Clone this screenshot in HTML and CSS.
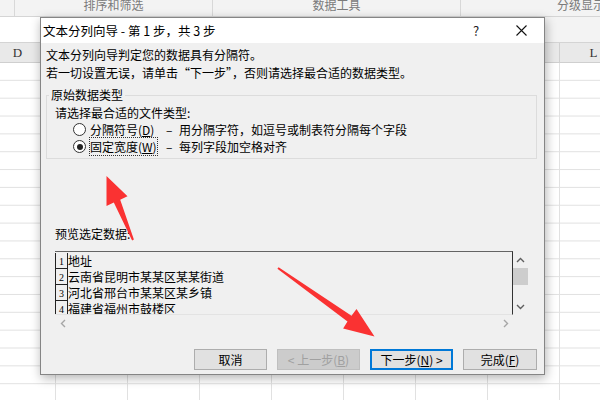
FILE: index.html
```html
<!DOCTYPE html>
<html lang="zh-CN">
<head>
  <meta charset="UTF-8" />
  <title>文本分列向导</title>
  <link rel="stylesheet" href="styles.css">
</head>
<body>
  <div class="excel">
    <div class="ribbon">
      <div class="ribbon-group g0"></div>
      <div class="ribbon-group g1">排序和筛选</div>
      <div class="ribbon-group g2">数据工具</div>
      <div class="ribbon-group g3">分级显示</div>
    </div>
    <div class="formula-bar"><div class="formula-input"></div></div>
    <div class="col-headers">
      <div class="col">D</div><div class="col"></div><div class="col"></div>
      <div class="col"></div><div class="col"></div><div class="col"></div>
      <div class="col"></div><div class="col"></div><div class="col">L</div>
    </div>
    <div class="grid"></div>
  </div>

  <div class="dialog">
    <div class="titlebar">
      <span class="title">文本分列向导 - 第 1 步，共 3 步</span>
      <span class="help">?</span>
      <span class="close">
        <svg width="11" height="11" viewBox="0 0 11 11"><path d="M0.5 0.5 L10.5 10.5 M10.5 0.5 L0.5 10.5" stroke="#111" stroke-width="1.1" fill="none"/></svg>
      </span>
    </div>

    <div class="content">
      <p class="line">文本分列向导判定您的数据具有分隔符。</p>
      <p class="line">若一切设置无误，请单击“下一步”，否则请选择最合适的数据类型。</p>

      <fieldset class="group">
        <legend>原始数据类型</legend>
        <div class="group-body">
          <div class="row">请选择最合适的文件类型:</div>
          <div class="row radio-row">
            <span class="radio"></span>
            <span class="opt">分隔符号(<u>D</u>)</span><span class="dash">–</span>用分隔字符，如逗号或制表符分隔每个字段
          </div>
          <div class="row radio-row">
            <span class="radio checked"></span>
            <span class="opt"><span class="focus">固定宽度(<u>W</u>)</span></span><span class="dash">–</span>每列字段加空格对齐
          </div>
        </div>
      </fieldset>

      <div class="preview-label">预览选定数据:</div>
      <div class="preview">
        <div class="preview-data">
          <div class="prow"><span class="num">1</span>地址</div>
          <div class="prow"><span class="num">2</span>云南省昆明市某某区某某街道</div>
          <div class="prow"><span class="num">3</span>河北省邢台市某某区某乡镇</div>
          <div class="prow"><span class="num">4</span>福建省福州市鼓楼区</div>
        </div>
        <div class="vbar">
          <span class="arrow-btn">
            <svg width="9" height="6" viewBox="0 0 9 6"><path d="M1 5 L4.5 1.5 L8 5" stroke="#5f5f5f" stroke-width="1.4" fill="none"/></svg>
          </span>
          <span class="thumb"></span>
          <span class="arrow-btn">
            <svg width="9" height="6" viewBox="0 0 9 6"><path d="M1 1 L4.5 4.5 L8 1" stroke="#5f5f5f" stroke-width="1.4" fill="none"/></svg>
          </span>
        </div>
        <div class="hbar">
          <span class="arrow-btn">
            <svg width="6" height="9" viewBox="0 0 6 9"><path d="M5 1 L1.5 4.5 L5 8" stroke="#a6a6a6" stroke-width="1.4" fill="none"/></svg>
          </span>
          <span class="arrow-btn">
            <svg width="6" height="9" viewBox="0 0 6 9"><path d="M1 1 L4.5 4.5 L1 8" stroke="#a6a6a6" stroke-width="1.4" fill="none"/></svg>
          </span>
        </div>
        <div class="corner"></div>
      </div>

      <div class="buttons">
        <button class="btn w73">取消</button>
        <button class="btn w83" disabled>&lt; 上一步(<u>B</u>)</button>
        <button class="btn w83 default">下一步(<u>N</u>) &gt;</button>
        <button class="btn w74">完成(<u>F</u>)</button>
      </div>
    </div>
  </div>

  <!-- 标注箭头 -->
  <svg class="marks" width="600" height="400" viewBox="0 0 600 400">
    <polygon fill="#fa3232" points="133.9,239.6 120.2,199.7 127.5,196.2 106.5,176 106.5,206 113.8,202.4 132.1,240.4"/>
    <polygon fill="#fa3232" points="277.4,268.8 347.5,321.6 343.1,328.5 374.5,336.5 356.5,309 351.5,315.8 278.6,267.2"/>
  </svg>
</body>
</html>
```

FILE: styles.css
```css
* { box-sizing: border-box; }
body { margin: 0; width: 600px; height: 400px; overflow: hidden; position: relative; background: #fff; font-family: "Noto Sans CJK SC", sans-serif; font-size: 12px; color: #000; }

/* 背景表格 */
.excel { width: 600px; height: 400px; overflow: hidden; }
.ribbon { display: flex; height: 17px; background: #f3f3f3; border-bottom: 1px solid #d5d5d5; overflow: hidden; }
.ribbon-group { flex: none; border-right: 1px solid #d8d8d8; color: #7b7b7b; font-size: 12px; line-height: 9px; text-align: center; white-space: nowrap; }
.g0 { width: 15px; }
.g1 { width: 198px; }
.g2 { width: 248px; }
.g3 { width: 240px; border-right: none; }
.formula-bar { display: flex; height: 26px; background: #f3f3f3; border-bottom: 1px solid #d4d4d4; }
.formula-input { width: 520px; background: #fff; }
.col-headers { display: flex; height: 20px; margin-left: -16px; background: #e9e9e9; border-bottom: 1px solid #cfcfcf; }
.col { flex: none; width: 72px; padding-right: 4px; border-right: 1px solid #d0d0d0; text-align: center; font-family: "Liberation Serif", serif; font-size: 13px; line-height: 19px; color: #333; }
.grid { height: 337px; background-image: linear-gradient(#e1e1e1 1px, transparent 1px), linear-gradient(90deg, #e1e1e1 1px, transparent 1px); background-size: 100% 17.85px, 72px 100%; background-position: 0 16.85px, 55px 0; }

/* 对话框 */
.dialog { position: absolute; left: 40px; top: 17px; width: 505px; height: 358px; background: #f0f0f0; border: 1px solid #858585; box-shadow: 1px 3px 10px rgba(0, 0, 0, 0.3); }
.titlebar { display: flex; align-items: center; height: 25px; padding-left: 2px; background: #fff; }
.title { font-size: 12.5px; line-height: 25px; }
.help { margin-left: auto; width: 40px; text-align: center; font-size: 13px; line-height: 25px; color: #222; }
.close { display: flex; align-items: center; justify-content: center; width: 46px; height: 25px; margin-left: 2px; }

.content { padding: 3px 7px 0 5px; }
.line { margin: 0; line-height: 18px; white-space: nowrap; }

.group { margin: 4px 0 0; padding: 0 0 3px; border: 1px solid #dcdcdc; min-width: 0; }
.group legend { margin-left: 2px; padding: 0 2px; line-height: 18px; }
.group-body { padding-left: 8px; }
.row { line-height: 17px; height: 17px; white-space: nowrap; }
.radio-row { display: flex; align-items: center; margin-left: 18px; }
.radio { flex: none; position: relative; width: 13px; height: 13px; margin-right: 4px; border: 1px solid #333; border-radius: 50%; background: #fff; }
.radio.checked::after { content: ""; position: absolute; left: 2.5px; top: 2.5px; width: 6px; height: 6px; border-radius: 50%; background: #222; }
.opt { flex: none; display: inline-block; width: 76px; }
.focus { outline: 1px dotted #333; outline-offset: 0; }
.dash { flex: none; display: inline-block; width: 13px; }

.preview-label { margin-top: 66px; padding-left: 9px; line-height: 17px; }
.preview { display: grid; grid-template-columns: 458px 15px; grid-template-rows: 64px 16px; width: 473px; height: 80px; margin: 9px 0 0 9px; }
.preview-data { overflow: hidden; padding-top: 1px; border-top: 1px solid #646464; border-right: 1px solid #333; border-bottom: 1px solid #e3e3e3; }
.prow { display: flex; height: 16px; line-height: 16px; white-space: nowrap; }
.num { flex: none; display: flex; align-items: flex-end; justify-content: center; width: 13px; height: 16px; padding-bottom: 1px; border-left: 1px solid #222; border-right: 1px solid #222; border-bottom: 1px solid #222; font-family: "Liberation Serif", serif; font-size: 10px; line-height: 11px; }
.vbar { display: flex; flex-direction: column; align-items: center; }
.vbar .arrow-btn { display: flex; align-items: center; justify-content: center; width: 15px; height: 17px; }
.vbar .arrow-btn:last-child { margin-top: auto; }
.thumb { width: 15px; height: 17px; background: #cdcdcd; }
.hbar { display: flex; justify-content: space-between; }
.hbar .arrow-btn { display: flex; align-items: center; justify-content: center; width: 15px; height: 16px; }

.buttons { display: flex; justify-content: flex-end; gap: 10px; margin-top: 18px; }
.btn { height: 21px; padding: 0; background: #e1e1e1; border: 1px solid #adadad; font-family: "Noto Sans CJK SC", sans-serif; font-size: 12px; line-height: 18px; color: #000; }
.btn:disabled { background: #cccccc; border-color: #bfbfbf; color: #a0a0a0; }
.btn.default { border: 2px solid #0078d7; }
.w73 { width: 73px; }
.w74 { width: 74px; }
.w83 { width: 83px; }

/* 标注 */
.marks { position: absolute; left: 0; top: 0; pointer-events: none; }
```
